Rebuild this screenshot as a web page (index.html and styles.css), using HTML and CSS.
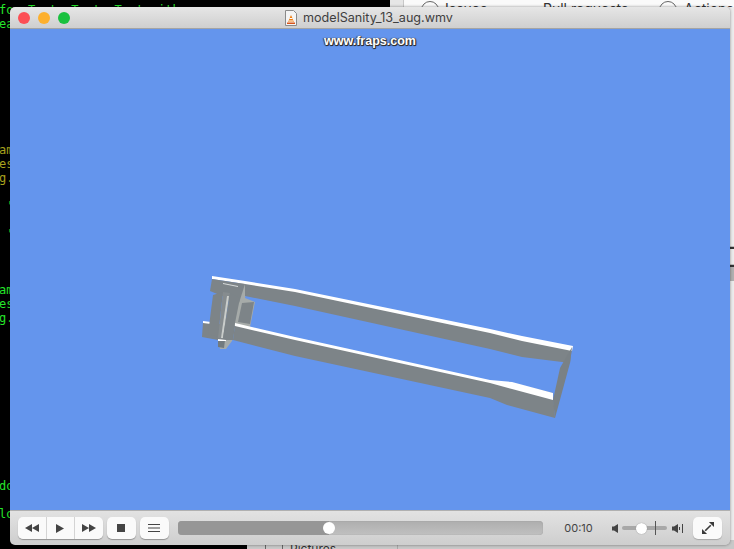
FILE: index.html
```html
<!DOCTYPE html>
<html lang="en">
<head>
    <meta charset="UTF-8">
    <meta name="viewport" content="width=device-width, initial-scale=1.0">
    <title>modelSanity_13_aug.wmv</title>
    <link rel="stylesheet" href="styles.css">
</head>
<body>
    <div class="desktop">
        <!-- Terminal behind the player -->
        <pre class="terminal">for Text  Text  Text with
eat







 
<span class="warn">am
es
g.</span>

 '

 '



<span>am
es
g.</span>











do

lo</pre>

        <!-- Browser behind the player -->
        <div class="browser">
            <div class="browser-tabs">
                <div class="browser-gutter"></div>
                <span class="tab-icon tab-issues"></span>
                <span class="tab-label tab-label-issues">Issues</span>
                <span class="tab-label tab-label-pulls">Pull requests</span>
                <span class="tab-icon tab-actions"></span>
                <span class="tab-label tab-label-actions">Actions</span>
            </div>
            <div class="browser-side">
                <span class="side-mark"></span>
                <span class="side-mark side-mark-active"></span>
            </div>
            <div class="browser-foot">
                <span class="foot-folder"></span>
                <span class="foot-label">Pictures</span>
                <span class="foot-line"></span>
            </div>
        </div>

        <!-- Player window -->
        <div class="player">
            <div class="titlebar">
                <div class="lights">
                    <span class="light light-close"></span>
                    <span class="light light-min"></span>
                    <span class="light light-max"></span>
                </div>
                <div class="title">
                    <svg class="file-icon" width="14" height="16" viewBox="0 0 14 16">
                        <path d="M1.5 .5h8l3 3v12h-11z" fill="#f4f4f4" stroke="#8a8a8a"/>
                        <path d="M7 5l3 7H4z" fill="#ee7d11"/>
                        <path d="M5.5 8.5h3M4.500 11h5" stroke="#fff" stroke-width="1"/>
                        <path d="M3 12.500h8V14H3z" fill="#d8541a"/>
                    </svg>
                    <span>modelSanity_13_aug.wmv</span>
                </div>
            </div>

            <div class="video">
                <div class="watermark">www.fraps.com</div>
                <svg class="model" width="720" height="481" viewBox="10 29 720 481">
                    <!-- clamp frame -->
                    <polygon points="240,283 248,283 245,298 255,302 250,327 235,325 232,341 226,349 220,349 218,340" fill="#a6aba9"/>
                    <polygon points="242,303 254,302 250,324 238,322" fill="#7d8488"/>
                    <!-- lower arm -->
                    <polygon points="235,325 295,338 490,381 512,383 553,393 555,418 507,405 490,398 295,356 233,340" fill="#7d8488"/>
                    <polygon points="235,323 295,337 490,380 512,382 553,393 553,400 512,389 490,383 295,340 235,326" fill="#fff"/>
                    <!-- upper arm -->
                    <polygon points="245,282 295,291 490,331 522,338 572,347 570,363 522,357 490,349 295,306 245,296" fill="#7d8488"/>
                    <polygon points="212,276 245,281 295,289 490,329 522,336 573,346 572,351 522,341 490,333 295,292 245,284 212,279" fill="#fff"/>
                    <!-- far end -->
                    <polygon points="572,347 570,363 555,418 553,400 560,368" fill="#7a8185"/>
                    <!-- clamp blocks -->
                    <polygon points="203,322 212,323 235,326 233,340 218,340 202,337" fill="#7d8488"/>
                    <polygon points="203,321 211,322 211,324 203,323" fill="#fff"/>
                    <polygon points="212,279 245,284 239,303 210,291" fill="#7d8488"/>
                    <polygon points="223,283 238,286 238,287 223,284" fill="#d8dbdb"/>
                    <!-- clamp pillars -->
                    <polygon points="213,295 223,292 218,337 208,334" fill="#7d8488"/>
                    <polygon points="223,292 230,293 223,339 218,338" fill="#868c8f"/>
                    <polygon points="227,296 229,296 223,338 221,338" fill="#c9cdcb"/>
                    <polygon points="230,293 240,298 232,338 223,338" fill="#7d8488"/>
                    <polygon points="218,340 225,340 224,348 218,347" fill="#727a7e"/>
                    <polygon points="218,339 226,340 226,341 218,341" fill="#fff"/>
                </svg>
            </div>

            <div class="controls">
                <div class="btn-group">
                    <button class="btn btn-seg">
                        <svg width="14" height="8" viewBox="0 0 14 8"><path d="M7 0v8L0 4zM14 0v8L7 4z" fill="#444"/></svg>
                    </button>
                    <button class="btn btn-seg">
                        <svg width="8" height="9" viewBox="0 0 8 9"><path d="M0 0l8 4.500L0 9z" fill="#444"/></svg>
                    </button>
                    <button class="btn btn-seg">
                        <svg width="14" height="8" viewBox="0 0 14 8"><path d="M0 0l7 4-7 4zM7 0l7 4-7 4z" fill="#444"/></svg>
                    </button>
                </div>
                <button class="btn btn-single">
                    <svg width="8" height="8" viewBox="0 0 8 8"><rect width="8" height="8" fill="#444"/></svg>
                </button>
                <button class="btn btn-single">
                    <svg width="12" height="8" viewBox="0 0 12 8"><path d="M0 .5h12M0 4h12M0 7.500h12" stroke="#444"/></svg>
                </button>
                <div class="seek">
                    <div class="seek-played"></div>
                    <div class="seek-knob"></div>
                </div>
                <div class="time">00:10</div>
                <svg class="vol-icon" width="6" height="9" viewBox="0 0 6 9"><path d="M0 2.500h2L6 0v9L2 6.500H0z" fill="#444"/></svg>
                <div class="volume">
                    <div class="volume-tick"></div>
                    <div class="volume-knob"></div>
                </div>
                <svg class="vol-icon" width="11" height="9" viewBox="0 0 11 9"><path d="M0 2.500h2L6 0v9L2 6.500H0z" fill="#444"/><path d="M7.500 3v3M10.500 0v9" stroke="#444"/></svg>
                <button class="btn btn-full">
                    <svg width="12" height="12" viewBox="0 0 13 13"><path d="M7.500 0H13v5.500zM0 7.500V13h5.500z" fill="#3a3a3a"/><path d="M9.500 3.500L3.500 9.500" stroke="#3a3a3a" stroke-width="1.800"/></svg>
                </button>
            </div>
        </div>
    </div>
</body>
</html>
```

FILE: styles.css
```css
html, body {
    margin: 0;
    padding: 0;
    overflow: hidden;
}
body {
    font-family: Inter, "Liberation Sans", sans-serif;
}
.desktop {
    position: relative;
    width: 734px;
    height: 549px;
    overflow: hidden;
    background: #000;
}

/* terminal */
.terminal {
    position: absolute;
    left: -1px;
    top: 3px;
    margin: 0;
    color: #25e52a;
    font-family: "DejaVu Sans Mono", monospace;
    font-size: 12px;
    line-height: 14px;
}
.warn {
    color: #a8a21e;
}

/* browser */
.browser {
    position: absolute;
    left: 390px;
    top: 0;
    width: 344px;
    height: 549px;
    background: #ececec;
}
.browser-tabs {
    position: relative;
    height: 7px;
    overflow: hidden;
    background: #fafafa;
    color: #333;
    font-size: 14px;
}
.browser-gutter {
    width: 13px;
    height: 7px;
    background: #e6e6e6;
    border-right: 1px solid #c8c8c8;
}
.tab-icon {
    position: absolute;
    top: 1px;
    width: 16px;
    height: 16px;
    border: 1px solid #666;
    border-radius: 50%;
}
.tab-issues {
    left: 31px;
}
.tab-actions {
    left: 269px;
}
.tab-label {
    position: absolute;
    top: 0;
}
.tab-label-issues {
    left: 55px;
}
.tab-label-pulls {
    left: 153px;
}
.tab-label-actions {
    left: 294px;
}
.browser-side {
    position: absolute;
    right: 0;
    top: 246px;
    width: 4px;
}
.side-mark {
    display: block;
    height: 16px;
    margin-bottom: 1px;
    border-top: 1px solid #bbb;
    background: linear-gradient(#333 0 2px, transparent 2px);
}
.side-mark-active {
    background: #b0b0b0 linear-gradient(#333 0 2px, transparent 2px);
}
.browser-foot {
    position: absolute;
    left: -143px;
    top: 540px;
    width: 487px;
    height: 9px;
    background: #c8c8c8;
    color: #333;
    font-size: 12px;
}
.foot-folder {
    position: absolute;
    left: 18px;
    top: 2px;
    width: 16px;
    height: 10px;
    border: 1px solid #666;
}
.foot-label {
    position: absolute;
    left: 43px;
    top: 1px;
}
.foot-line {
    position: absolute;
    left: 150px;
    top: 0;
    width: 1px;
    height: 9px;
    background: #a8a8a8;
}

/* player */
.player {
    position: absolute;
    left: 10px;
    top: 7px;
    width: 720px;
    height: 538px;
    display: flex;
    flex-direction: column;
    border-radius: 5px;
    overflow: hidden;
    box-shadow: 0 0 3px rgba(0, 0, 0, 0.45);
}
.titlebar {
    position: relative;
    flex: 0 0 21px;
    display: flex;
    align-items: center;
    justify-content: center;
    background: linear-gradient(#e6e6e6, #cfcfcf);
    border-bottom: 1px solid #a4a4a4;
}
.lights {
    position: absolute;
    left: 8px;
    top: 5px;
    display: flex;
    gap: 8px;
}
.light {
    width: 12px;
    height: 12px;
    border-radius: 50%;
}
.light-close {
    background: #fc4f55;
}
.light-min {
    background: #fdb02e;
}
.light-max {
    background: #1ac13f;
}
.title {
    display: flex;
    align-items: center;
    gap: 5px;
    font-size: 12.600px;
    color: #3f3f3f;
    margin-right: 3px;
}
.file-icon {
    display: block;
}
.video {
    position: relative;
    flex: 1;
    background: #6495ed;
}
.watermark {
    padding-top: 6px;
    text-align: center;
    color: #fff;
    font-family: "Liberation Sans", sans-serif;
    font-weight: bold;
    font-size: 12.500px;
    line-height: 13px;
    text-shadow: 1px 1px 0 #333, -1px 0 1px #444, 0 1px 1px #222, 1px 0 1px #444;
}
.model {
    position: absolute;
    left: 0;
    top: 0;
}
.controls {
    flex: 0 0 35px;
    display: flex;
    align-items: center;
    padding: 0 8px;
    background: linear-gradient(#e2e2e2, #cecece);
    border-top: 1px solid #b0b0b0;
    box-sizing: border-box;
}
.btn-group {
    display: flex;
    width: 85px;
    height: 22px;
    border-radius: 5px;
    overflow: hidden;
    box-shadow: 0 1px 1px rgba(0, 0, 0, 0.3);
    margin-right: 4px;
}
.btn {
    display: flex;
    align-items: center;
    justify-content: center;
    padding: 0;
    border: 0;
    background: #fafafa;
}
.btn-seg {
    flex: 1;
    border-right: 1px solid #d4d4d4;
}
.btn-seg:last-child {
    border-right: 0;
}
.btn-single {
    width: 29px;
    height: 22px;
    margin-right: 4px;
    border-radius: 5px;
    box-shadow: 0 1px 1px rgba(0, 0, 0, 0.3);
}
.seek {
    position: relative;
    width: 367px;
    height: 14px;
    margin-left: 5px;
    box-sizing: border-box;
    border-radius: 4px;
    background: linear-gradient(#aeaeae, #c0c0c0);
    box-shadow: inset 0 0 1px #888;
}
.seek-played {
    width: 151px;
    height: 14px;
    border-radius: 4px 0 0 4px;
    background: #969696;
}
.seek-knob {
    position: absolute;
    left: 145px;
    top: 1px;
    width: 12px;
    height: 12px;
    border-radius: 50%;
    background: #fff;
}
.time {
    width: 28px;
    margin-left: 21px;
    font-size: 11px;
    color: #444;
}
.vol-icon {
    flex: none;
    display: block;
    margin-left: 20px;
}
.volume {
    position: relative;
    width: 45px;
    height: 4px;
    margin-left: 4px;
    border-radius: 2px;
    background: #a8a8a8;
}
.vol-icon + .volume + .vol-icon {
    margin-left: 5px;
}
.volume-tick {
    position: absolute;
    left: 33px;
    top: -5px;
    width: 1px;
    height: 14px;
    background: #555;
}
.volume-knob {
    position: absolute;
    left: 14px;
    top: -3.500px;
    width: 11px;
    height: 11px;
    border-radius: 50%;
    background: #fff;
    box-shadow: 0 0 1px #777;
}
.btn-full {
    width: 29px;
    height: 22px;
    margin-left: 10px;
    border-radius: 5px;
    box-shadow: 0 1px 1px rgba(0, 0, 0, 0.2);
}
```
